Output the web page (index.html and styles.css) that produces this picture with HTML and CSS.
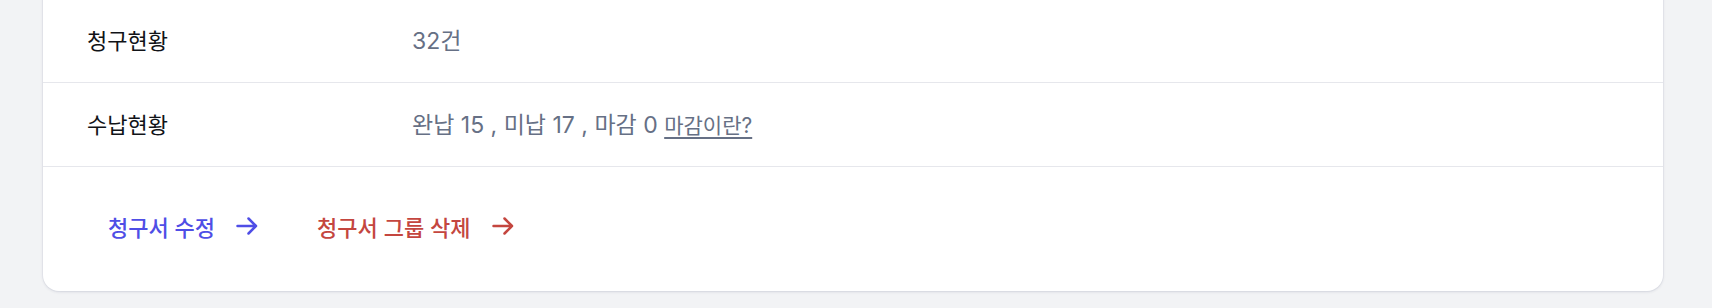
FILE: index.html
```html
<!DOCTYPE html>
<html lang="ko">
<head>
	<meta charset="UTF-8">
	<title>청구서 그룹</title>
	<link rel="stylesheet" href="styles.css">
</head>
<body>
	<div class="page">
		<div class="card">
			<div class="row">
				<div class="row-label">청구현황</div>
				<div class="row-value">32건</div>
			</div>
			<div class="row">
				<div class="row-label">수납현황</div>
				<div class="row-value">완납 15 , 미납 17 , 마감 0 <a href="javascript:;" class="help">마감이란?</a></div>
			</div>
			<div class="actions">
				<a href="javascript:;" class="act act-edit">청구서 수정
					<svg viewBox="0 0 22 22" width="22" height="22"><path d="M1.5 11h18.5M12.5 3.5L20 11l-7.5 7.5" fill="none" stroke="currentColor" stroke-width="2.5" stroke-linecap="round" stroke-linejoin="round"/></svg>
				</a>
				<a href="javascript:;" class="act act-del">청구서 그룹 삭제
					<svg viewBox="0 0 22 22" width="22" height="22"><path d="M1.5 11h18.5M12.5 3.5L20 11l-7.5 7.5" fill="none" stroke="currentColor" stroke-width="2.5" stroke-linecap="round" stroke-linejoin="round"/></svg>
				</a>
			</div>
		</div>
	</div>
</body>
</html>
```
FILE: styles.css
```css
*{
	margin: 0;
	padding: 0;
	box-sizing: border-box;
}
body{
	background: #f2f3f5;
	font-family: Inter, "Noto Sans CJK KR", sans-serif;
	overflow: hidden;
}
a{
	text-decoration: none;
}
.page{
	padding: 0 49px 17px 43px;
}
/*카드*/
.card{
	margin-top: -39px;
	padding-top: 38px;
	background: #fff;
	border-radius: 16px;
	box-shadow: 0 1px 3px rgba(30,40,80,0.12), 0 0 0 1px rgba(30,40,80,0.03);
}
.row{
	display: grid;
	grid-template-columns: 325px 1fr;
	align-items: center;
	height: 84px;
	padding: 0 44px 4px;
	border-bottom: 1px solid #e6e7ec;
}
.row-label{
	font-size: 22px;
	font-weight: 400;
	color: #111318;
}
.row-value{
	font-size: 23px;
	color: #667085;
}
.help{
	font-size: 21px;
	color: #667085;
	text-decoration: underline;
	text-underline-offset: 4px;
}
/*하단 버튼*/
.actions{
	display: flex;
	align-items: center;
	height: 124px;
	padding: 0 44px 6px;
	gap: 17px;
}
.act{
	display: flex;
	align-items: center;
	gap: 21px;
	padding: 8px 21px;
	font-size: 22px;
	font-weight: 500;
}
.act svg{
	display: block;
}
.act-edit{
	color: #4f4ee6;
}
.act-del{
	color: #c4463f;
}
```
